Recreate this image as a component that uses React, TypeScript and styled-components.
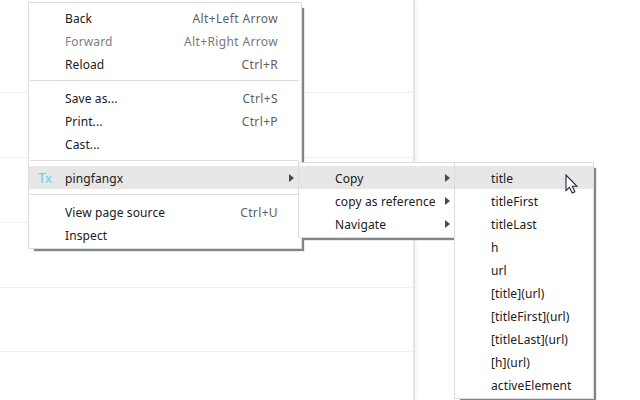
import React from "react";
import styled, { createGlobalStyle } from "styled-components";

const GlobalStyle = createGlobalStyle`
  body { margin: 0; background: #fff; overflow: hidden; }
  * { box-sizing: border-box; }
`;

const Page = styled.div`
  position: relative;
  width: 640px;
  height: 400px;
  overflow: hidden;
  background: #fff;
  font-family: "Noto Sans", sans-serif;
  font-size: 12px;
  color: #222;
`;

const ContentPane = styled.div`
  display: grid;
  grid-template-rows: 93px 65px 65px 65px 64px 1fr;
  width: 415px;
  height: 400px;
  border-right: 2px solid #e6e6e6;
  box-shadow: 1px 0 5px rgba(0, 0, 0, 0.08);
`;

const ListRow = styled.div`
  border-bottom: 1px solid #efefef;
  &:last-child { border-bottom: 0; }
`;

const Menu = styled.div<{ $x: number; $y: number; $w: number; $h: number }>`
  position: absolute;
  left: ${(p) => p.$x}px;
  top: ${(p) => p.$y}px;
  width: ${(p) => p.$w}px;
  height: ${(p) => p.$h}px;
  padding-top: 3px;
  background: #fff;
  border: 1px solid #dcdce2;
  box-shadow: 4px 4px 1px -2px #858585;
`;

const Item = styled.div<{ $active?: boolean; $disabled?: boolean }>`
  display: flex;
  align-items: center;
  height: 23px;
  padding-right: 23px;
  background: ${(p) => (p.$active ? "#e7e7e7" : "transparent")};
  color: ${(p) => (p.$disabled ? "#808080" : "#202020")};
`;

const IconSlot = styled.div`
  display: flex;
  flex: none;
  align-items: baseline;
  width: 36px;
  padding: 1px 0 0 9px;
  line-height: 22px;
  color: #74d2f7;
  font-weight: 500;
  font-size: 14px;
`;

const SmallLetter = styled.span`
  margin-left: -1px;
  font-size: 13px;
`;

const Label = styled.span`
  flex: 1;
  padding-top: 2px;
  line-height: 21px;
  white-space: nowrap;
  letter-spacing: 0.11px;
`;

const Shortcut = styled.span<{ $disabled?: boolean }>`
  padding-top: 2px;
  line-height: 21px;
  letter-spacing: 0.36px;
  color: ${(p) => (p.$disabled ? "#777" : "#606060")};
`;

const Separator = styled.div`
  height: 11px;
  padding: 5px 2px 0 1px;
  &::before {
    content: "";
    display: block;
    height: 1px;
    background: #dcdce2;
  }
`;

const ArrowIcon = styled.svg`
  flex: none;
  width: 5px;
  height: 8px;
  margin-right: -16px;
  fill: #4a4a4a;
`;

const Cursor = styled.svg`
  position: absolute;
  left: 565px;
  top: 174px;
  width: 13px;
  height: 21px;
`;

type Entry = {
  label?: string;
  keys?: string;
  disabled?: boolean;
  active?: boolean;
  submenu?: boolean;
  logo?: boolean;
};

const mainItems: Entry[] = [
  { label: "Back", keys: "Alt+Left Arrow" },
  { label: "Forward", keys: "Alt+Right Arrow", disabled: true },
  { label: "Reload", keys: "Ctrl+R" },
  {},
  { label: "Save as...", keys: "Ctrl+S" },
  { label: "Print...", keys: "Ctrl+P" },
  { label: "Cast..." },
  {},
  { label: "pingfangx", active: true, submenu: true, logo: true },
  {},
  { label: "View page source", keys: "Ctrl+U" },
  { label: "Inspect" },
];

const subItems: Entry[] = [
  { label: "Copy", active: true, submenu: true },
  { label: "copy as reference", submenu: true },
  { label: "Navigate", submenu: true },
];

const copyItems: Entry[] = [
  "title", "titleFirst", "titleLast", "h", "url", "[title](url)",
  "[titleFirst](url)", "[titleLast](url)", "[h](url)", "activeElement",
].map((label, i) => ({ label, active: i === 0 }));

const Entries = ({ items }: { items: Entry[] }) => (
  <>
    {items.map((it, i) =>
      it.label ? (
        <Item key={i} $active={it.active} $disabled={it.disabled}>
          <IconSlot>{it.logo && <>T<SmallLetter>x</SmallLetter></>}</IconSlot>
          <Label>{it.label}</Label>
          {it.keys && <Shortcut $disabled={it.disabled}>{it.keys}</Shortcut>}
          {it.submenu && (
            <ArrowIcon viewBox="0 0 5 8"><path d="M0 0L5 4L0 8Z" /></ArrowIcon>
          )}
        </Item>
      ) : (
        <Separator key={i} />
      )
    )}
  </>
);

export default function App() {
  return (
    <>
      <GlobalStyle />
      <Page>
        <ContentPane>
          {[0, 1, 2, 3, 4, 5].map((n) => <ListRow key={n} />)}
        </ContentPane>
        <Menu $x={28} $y={2} $w={274} $h={247}><Entries items={mainItems} /></Menu>
        <Menu $x={298} $y={162} $w={160} $h={76}><Entries items={subItems} /></Menu>
        <Menu $x={454} $y={162} $w={140} $h={237}><Entries items={copyItems} /></Menu>
        <Cursor viewBox="0 0 13 21">
          <path
            d="M1 1V16.5L4.5 13.3L7.2 19L9.9 17.8L7.3 12.3H12Z"
            fill="#fff" stroke="#26263a" strokeWidth="1.1"
          />
        </Cursor>
      </Page>
    </>
  );
}
